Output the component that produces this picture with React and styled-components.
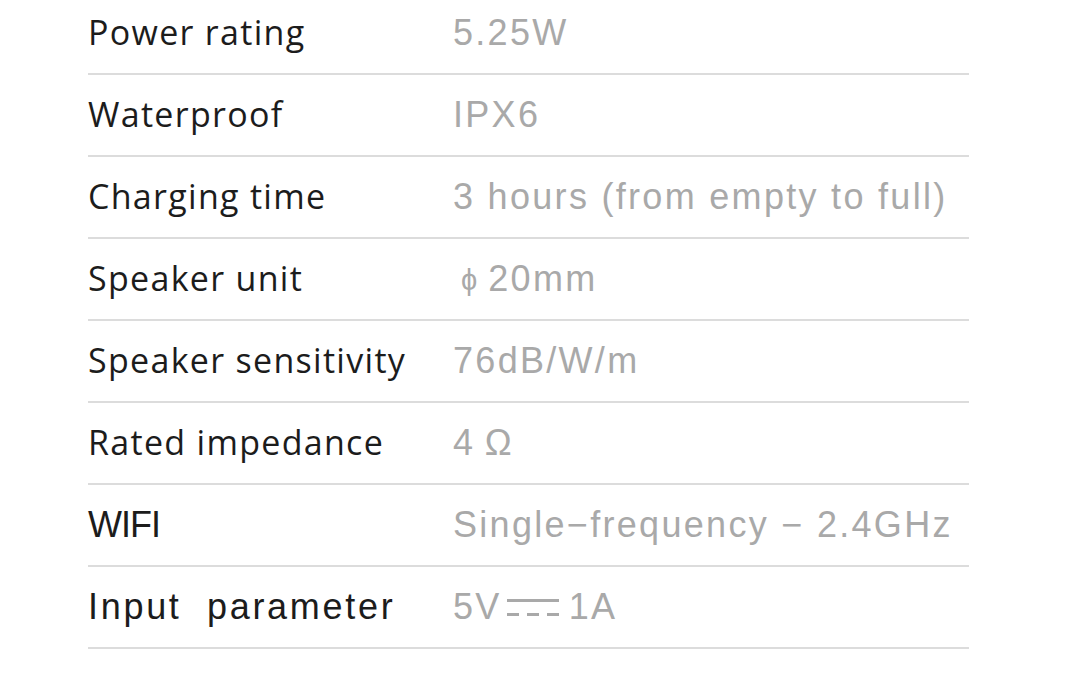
import React from "react";
import styled, { createGlobalStyle } from "styled-components";

const Global = createGlobalStyle`
  html, body { margin: 0; padding: 0; background: #ffffff; }
  body { width: 1080px; height: 700px; overflow: hidden; }
`;

const Table = styled.div`
  margin: -7px 0 0 88px;
  width: 881px;
  display: flex;
  flex-direction: column;
`;

const Row = styled.div`
  height: 80px;
  border-bottom: 2px solid #dcdcdc;
  display: grid;
  grid-template-columns: 365px 1fr;
  align-items: center;
`;

const Label = styled.div`
  font-family: ${(p) =>
    p.$helv ? '"Liberation Sans", Arial, sans-serif' : '"Open Sans", "Noto Sans", sans-serif'};
  font-size: ${(p) => (p.$helv ? "36px" : "34px")};
  letter-spacing: ${(p) => p.$tracking}px;
  padding-bottom: ${(p) => (p.$helv ? 0 : 3)}px;
  color: #1c1c1c;
  white-space: pre;
`;

const Value = styled.div`
  font-family: "Liberation Sans", Arial, sans-serif;
  font-size: 36px;
  letter-spacing: 2.3px;
  color: #a9a9a9;
  white-space: pre;
  display: flex;
  align-items: center;
`;

const Phi = styled.span`
  font-size: 29px;
  letter-spacing: 0;
  margin: 2px 11px 0 8px;
`;

const DcSymbol = styled.span`
  display: inline-flex;
  flex-direction: column;
  gap: 11px;
  width: 52px;
  margin: 0 10px 0 5px;
`;

const DcSolid = styled.span`
  height: 3px;
  background: #a9a9a9;
`;

const DcDashed = styled.span`
  height: 3px;
  background: repeating-linear-gradient(
    to right,
    #a9a9a9 0 12px,
    transparent 12px 20px
  );
`;

const rows = [
  { label: "Power rating", value: "5.25W" },
  { label: "Waterproof", value: "IPX6" },
  { label: "Charging time", value: "3 hours (from empty to full)" },
  { label: "Speaker unit", value: "phi" },
  { label: "Speaker sensitivity", value: "76dB/W/m" },
  { label: "Rated impedance", value: "4\u2009Ω" },
  { label: "WIFI", value: "Single\u2212frequency \u2212 2.4GHz", helv: true, tracking: -1 },
  { label: "Input  parameter", value: "dc", helv: true, tracking: 2.7 },
];

function renderValue(v) {
  if (v === "phi")
    return (
      <>
        <Phi>ϕ</Phi>20mm
      </>
    );
  if (v === "dc")
    return (
      <>
        5V
        <DcSymbol>
          <DcSolid />
          <DcDashed />
        </DcSymbol>
        1A
      </>
    );
  return v;
}

export default function App() {
  return (
    <>
      <Global />
      <Table>
        {rows.map((r) => (
          <Row key={r.label}>
            <Label $helv={r.helv} $tracking={r.tracking ?? 1.3}>
              {r.label}
            </Label>
            <Value>{renderValue(r.value)}</Value>
          </Row>
        ))}
      </Table>
    </>
  );
}
